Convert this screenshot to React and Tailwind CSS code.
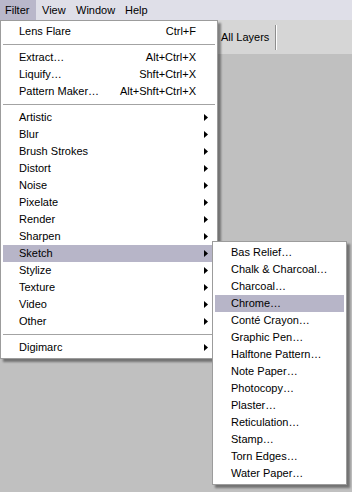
const font = { fontFamily: '"Liberation Sans", Arial, sans-serif' }

const mainItems = [
  { label: 'Lens Flare', shortcut: 'Ctrl+F' },
  { sep: true },
  { label: 'Extract…', shortcut: 'Alt+Ctrl+X' },
  { label: 'Liquify…', shortcut: 'Shft+Ctrl+X' },
  { label: 'Pattern Maker…', shortcut: 'Alt+Shft+Ctrl+X' },
  { sep: true },
  { label: 'Artistic', sub: true },
  { label: 'Blur', sub: true },
  { label: 'Brush Strokes', sub: true },
  { label: 'Distort', sub: true },
  { label: 'Noise', sub: true },
  { label: 'Pixelate', sub: true },
  { label: 'Render', sub: true },
  { label: 'Sharpen', sub: true },
  { label: 'Sketch', sub: true, active: true },
  { label: 'Stylize', sub: true },
  { label: 'Texture', sub: true },
  { label: 'Video', sub: true },
  { label: 'Other', sub: true },
  { sep: true },
  { label: 'Digimarc', sub: true },
]

const sketchItems = [
  'Bas Relief…',
  'Chalk & Charcoal…',
  'Charcoal…',
  'Chrome…',
  'Conté Crayon…',
  'Graphic Pen…',
  'Halftone Pattern…',
  'Note Paper…',
  'Photocopy…',
  'Plaster…',
  'Reticulation…',
  'Stamp…',
  'Torn Edges…',
  'Water Paper…',
]

const Arrow = () => (
  <svg width="4" height="7" viewBox="0 0 4 7" className="block">
    <polygon points="0,0 4,3.5 0,7" fill="#000" />
  </svg>
)

const MenuItem = ({ item }) => {
  if (item.sep) {
    return (
      <div className="h-[9px] pt-[4px]">
        <div className="h-px bg-[#a3a3a3]" />
      </div>
    )
  }
  return (
    <div className={`h-[17px] flex items-center pl-[16px] pr-[7px] text-[11px] text-black ${item.active ? 'bg-[#b7b5c8]' : ''}`}>
      <span className="flex-1 whitespace-nowrap">{item.label}</span>
      {item.shortcut && <span className="pr-[12px] whitespace-nowrap">{item.shortcut}</span>}
      {item.sub && <Arrow />}
    </div>
  )
}

export default function App() {
  return (
    <div className="relative w-[352px] h-[492px] bg-[#c0c0c0] overflow-hidden" style={font}>
      {/* menu bar */}
      <div className="h-[20px] bg-[#dfdfe8] flex items-stretch text-[11px] text-black">
        <div className="w-[36px] bg-[#b9b7ca] flex items-center pl-[5px]">Filter</div>
        <div className="flex items-center pl-[6px] w-[40px]">View</div>
        <div className="flex items-center w-[49px]">Window</div>
        <div className="flex items-center">Help</div>
      </div>

      {/* options bar */}
      <div className="h-[34px] bg-[#d6d6d6] flex items-center text-[11px] text-black pl-[221px]">
        <span>All Layers</span>
        <div className="ml-[6px] h-[25px] w-[2px] border-l border-[#8e8e8e] border-r border-r-white" />
      </div>

      {/* Filter menu */}
      <div className="absolute left-0 top-[20px] w-[218px] bg-white border border-[#9c9c9c] p-[2px] shadow-[3px_3px_2px_rgba(0,0,0,0.4)]">
        {mainItems.map((item, i) => (
          <MenuItem key={i} item={item} />
        ))}
      </div>

      {/* Sketch submenu */}
      <div className="absolute left-[212px] top-[241px] w-[135px] bg-white border border-[#9c9c9c] p-[2px] shadow-[3px_3px_2px_rgba(0,0,0,0.4)]">
        {sketchItems.map((label) => (
          <MenuItem key={label} item={{ label, active: label === 'Chrome…' }} />
        ))}
      </div>
    </div>
  )
}
